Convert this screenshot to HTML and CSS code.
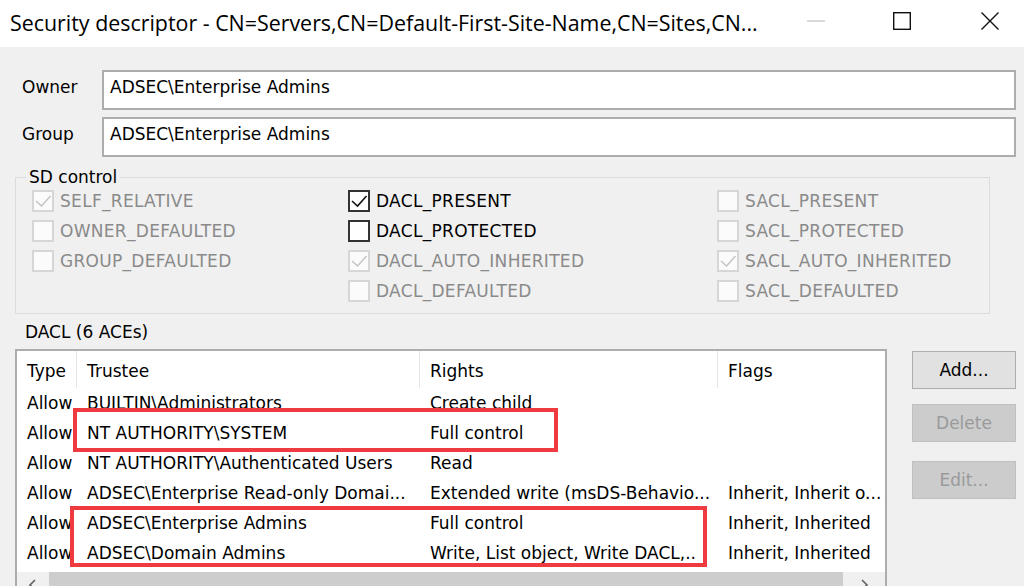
FILE: index.html
```html
<!DOCTYPE html>
<html lang="en">
<head>
<meta charset="utf-8">
<title>Security descriptor</title>
<link rel="stylesheet" href="styles.css">
</head>
<body>
<div class="window">
  <div class="titlebar">
    <div class="title">Security descriptor - CN=Servers,CN=Default-First-Site-Name,CN=Sites,CN...</div>
    <div class="controls">
      <svg class="ctl ctl-min" width="18" height="18" viewBox="0 0 18 18"><line x1="0" y1="9" x2="18" y2="9" stroke="#c9c9c9" stroke-width="1.4"/></svg>
      <svg class="ctl ctl-max" width="18" height="18" viewBox="0 0 18 18"><rect x="0.7" y="0.7" width="16.6" height="16.6" fill="none" stroke="#111" stroke-width="1.4"/></svg>
      <svg class="ctl ctl-close" width="18" height="18" viewBox="0 0 18 18"><path d="M0.5 0.5 L17.5 17.5 M17.5 0.5 L0.5 17.5" stroke="#111" stroke-width="1.4" fill="none"/></svg>
    </div>
  </div>

  <div class="content">
    <div class="field-row">
      <div class="field-label">Owner</div>
      <div class="textbox">ADSEC\Enterprise Admins</div>
    </div>
    <div class="field-row">
      <div class="field-label">Group</div>
      <div class="textbox">ADSEC\Enterprise Admins</div>
    </div>

    <fieldset class="sd">
      <legend>SD control</legend>
      <div class="cb-grid">
        <div class="cb-col">
          <div class="cb disabled"><span class="box"><svg viewBox="0 0 22 22"><path d="M4 11 L9.5 16 L18.5 6" /></svg></span>SELF_RELATIVE</div>
          <div class="cb disabled"><span class="box"></span>OWNER_DEFAULTED</div>
          <div class="cb disabled"><span class="box"></span>GROUP_DEFAULTED</div>
        </div>
        <div class="cb-col">
          <div class="cb"><span class="box"><svg viewBox="0 0 22 22"><path d="M4 11 L9.5 16 L18.5 6" /></svg></span>DACL_PRESENT</div>
          <div class="cb"><span class="box"></span>DACL_PROTECTED</div>
          <div class="cb disabled"><span class="box"><svg viewBox="0 0 22 22"><path d="M4 11 L9.5 16 L18.5 6" /></svg></span>DACL_AUTO_INHERITED</div>
          <div class="cb disabled"><span class="box"></span>DACL_DEFAULTED</div>
        </div>
        <div class="cb-col">
          <div class="cb disabled"><span class="box"></span>SACL_PRESENT</div>
          <div class="cb disabled"><span class="box"></span>SACL_PROTECTED</div>
          <div class="cb disabled"><span class="box"><svg viewBox="0 0 22 22"><path d="M4 11 L9.5 16 L18.5 6" /></svg></span>SACL_AUTO_INHERITED</div>
          <div class="cb disabled"><span class="box"></span>SACL_DEFAULTED</div>
        </div>
      </div>
    </fieldset>

    <div class="dacl-label">DACL (6 ACEs)</div>

    <div class="dacl-row">
      <div class="listview">
        <div class="lv-row lv-header">
          <div class="lv-cell">Type</div>
          <div class="lv-cell">Trustee</div>
          <div class="lv-cell">Rights</div>
          <div class="lv-cell">Flags</div>
        </div>
        <div class="lv-row">
          <div class="lv-cell">Allow</div>
          <div class="lv-cell">BUILTIN\Administrators</div>
          <div class="lv-cell">Create child</div>
          <div class="lv-cell"></div>
        </div>
        <div class="lv-row">
          <div class="lv-cell">Allow</div>
          <div class="lv-cell">NT AUTHORITY\SYSTEM</div>
          <div class="lv-cell">Full control</div>
          <div class="lv-cell"></div>
        </div>
        <div class="lv-row">
          <div class="lv-cell">Allow</div>
          <div class="lv-cell">NT AUTHORITY\Authenticated Users</div>
          <div class="lv-cell">Read</div>
          <div class="lv-cell"></div>
        </div>
        <div class="lv-row">
          <div class="lv-cell">Allow</div>
          <div class="lv-cell">ADSEC\Enterprise Read-only Domai...</div>
          <div class="lv-cell">Extended write (msDS-Behavio...</div>
          <div class="lv-cell">Inherit, Inherit o...</div>
        </div>
        <div class="lv-row">
          <div class="lv-cell">Allow</div>
          <div class="lv-cell">ADSEC\Enterprise Admins</div>
          <div class="lv-cell">Full control</div>
          <div class="lv-cell">Inherit, Inherited</div>
        </div>
        <div class="lv-row">
          <div class="lv-cell">Allow</div>
          <div class="lv-cell">ADSEC\Domain Admins</div>
          <div class="lv-cell">Write, List object, Write DACL,..</div>
          <div class="lv-cell">Inherit, Inherited</div>
        </div>
        <div class="hscroll">
          <span class="arrow arrow-left"><svg width="12" height="14" viewBox="0 0 12 14"><path d="M8 2 L3 7 L8 12" fill="none" stroke="#606060" stroke-width="1.6"/></svg></span>
          <span class="thumb"></span>
          <span class="arrow arrow-right"><svg width="12" height="14" viewBox="0 0 12 14"><path d="M4 2 L9 7 L4 12" fill="none" stroke="#606060" stroke-width="1.6"/></svg></span>
        </div>
        <div class="highlight hl-1"></div>
        <div class="highlight hl-2"></div>
      </div>

      <div class="buttons">
        <div class="btn btn-add">Add...</div>
        <div class="btn btn-delete disabled">Delete</div>
        <div class="btn btn-edit disabled">Edit...</div>
      </div>
    </div>
  </div>
</div>
</body>
</html>
```

FILE: styles.css
```css
html, body {
  margin: 0;
  padding: 0;
}

body {
  width: 1024px;
  height: 586px;
  overflow: hidden;
  background: #f0f0f0;
  font-family: "DejaVu Sans", sans-serif;
  font-size: 17px;
  color: #000;
}

.window {
  width: 1024px;
  height: 586px;
}

/* Title bar */
.titlebar {
  height: 47px;
  background: #fff;
  display: flex;
  align-items: center;
}

.title {
  flex: 1;
  padding-left: 10px;
  font-family: "Open Sans", "Noto Sans", sans-serif;
  font-size: 21.4px;
  white-space: nowrap;
  color: #000;
  margin-top: -2px;
}

.controls {
  display: flex;
  align-items: center;
  padding-right: 25px;
  margin-top: -5px;
}

.ctl {
  display: block;
}

.ctl-max {
  margin-left: 68px;
}

.ctl-close {
  margin-left: 70px;
}

/* Owner / Group */
.content {
  padding-top: 23px;
}

.field-row {
  display: flex;
  padding-left: 22px;
  padding-right: 8px;
  margin-bottom: 7px;
}

.field-label {
  width: 80px;
  padding-top: 2px;
  line-height: 30px;
}

.textbox {
  flex: 1;
  height: 40px;
  box-sizing: border-box;
  border: 2px solid #adadad;
  background: #fff;
  padding-left: 6px;
  line-height: 30px;
}

/* SD control group */
.sd {
  margin: 10px 34px 0 15px;
  padding: 0 0 7px 10px;
  border: 1px solid #dcdcdc;
  min-width: 0;
}

.sd legend {
  padding: 0 3px;
  line-height: 20px;
}

.cb-grid {
  display: grid;
  grid-template-columns: 316px 369px 1fr;
  margin-left: 6px;
  margin-top: -1px;
}

.cb {
  display: flex;
  align-items: center;
  height: 30px;
  gap: 6px;
  white-space: nowrap;
  letter-spacing: 0.3px;
}

.box {
  width: 22px;
  height: 22px;
  box-sizing: border-box;
  border: 2px solid #333;
  background: #fff;
  flex: none;
  display: flex;
}

.box svg {
  margin: -2px;
  width: 22px;
  height: 22px;
}

.box path {
  fill: none;
  stroke: #111;
  stroke-width: 1.6;
}

.cb.disabled {
  color: #8a8a8a;
}

.cb.disabled .box {
  border: 2px solid #d6d6d6;
  background: #fbfbfb;
}

.cb.disabled .box path {
  stroke: #c2c2c2;
  stroke-width: 1.4;
}

/* DACL */
.dacl-label {
  margin-top: 8px;
  padding-left: 25px;
  line-height: 20px;
}

.dacl-row {
  display: flex;
  align-items: flex-start;
  padding-left: 15px;
  margin-top: 7px;
  gap: 25px;
}

.listview {
  position: relative;
  width: 872px;
  height: 260px;
  box-sizing: border-box;
  border: 2px solid #adadad;
  background: #fff;
}

.lv-row {
  display: grid;
  grid-template-columns: 60px 343px 298px 1fr;
  height: 30px;
  line-height: 30px;
  white-space: nowrap;
}

.lv-cell {
  padding-left: 10px;
  overflow: hidden;
}

.lv-header {
  height: 37px;
  line-height: 33px;
}

.lv-header .lv-cell {
  padding-top: 4px;
  box-sizing: border-box;
  height: 37px;
  border-right: 1px solid #e5e5e5;
}

.lv-header .lv-cell:last-child {
  border-right: none;
}

.hscroll {
  display: flex;
  align-items: stretch;
  height: 30px;
  margin-top: 4px;
  background: #f0f0f0;
}

.arrow {
  width: 32px;
  display: flex;
  justify-content: center;
  padding-top: 6px;
  box-sizing: border-box;
}

.arrow svg {
  display: block;
}

.thumb {
  flex: 1;
  background: #cdcdcd;
}

.arrow-right {
  width: 42px;
}

.highlight {
  position: absolute;
  box-sizing: border-box;
  border: 4px solid #ef3b40;
}

.hl-1 {
  left: 56px;
  top: 57px;
  width: 485px;
  height: 44px;
}

.hl-2 {
  left: 53px;
  top: 155px;
  width: 637px;
  height: 61px;
}

/* Buttons */
.buttons {
  width: 104px;
  display: flex;
  flex-direction: column;
}

.btn {
  height: 38px;
  box-sizing: border-box;
  border: 1px solid #adadad;
  background: #e1e1e1;
  display: flex;
  align-items: center;
  justify-content: center;
}

.btn-add {
  margin-top: 2px;
}

.btn-delete {
  margin-top: 15px;
}

.btn-edit {
  margin-top: 19px;
}

.btn.disabled {
  background: #cccccc;
  border-color: #bfbfbf;
  color: #9a9a9a;
}
```
